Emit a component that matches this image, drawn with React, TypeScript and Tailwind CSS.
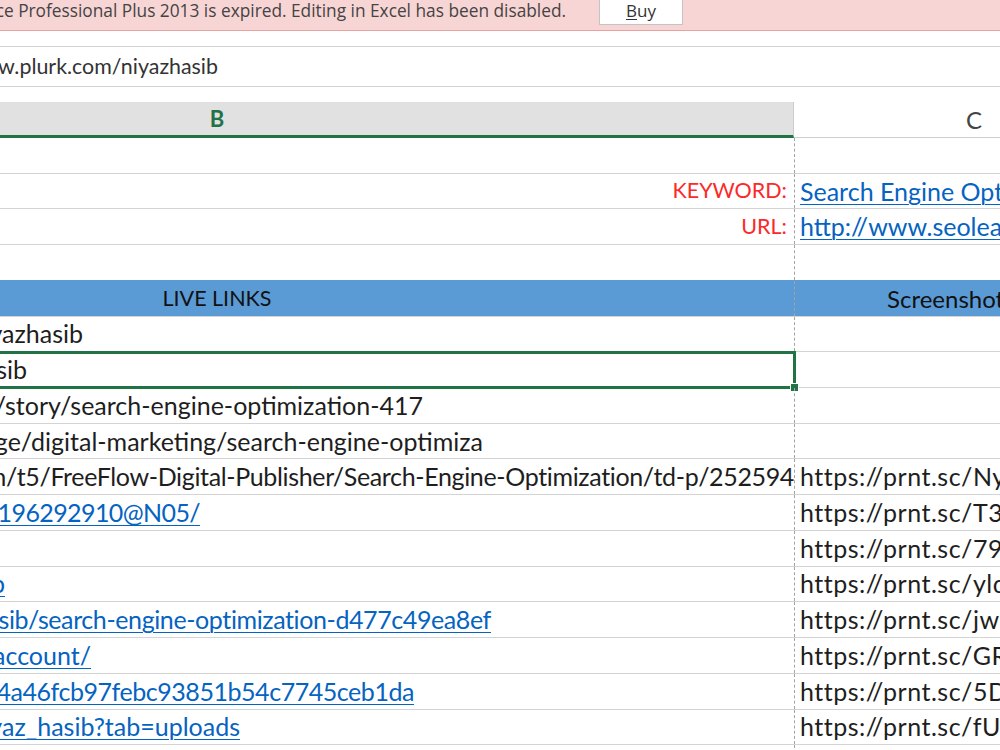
import type { ReactNode } from "react";

type Row =
  | { kind: "blank"; line?: string }
  | { kind: "label"; label: string; link: string }
  | { kind: "head" }
  | {
      kind: "data";
      text?: string;
      end?: string;
      fit?: string;
      link?: boolean;
      shot?: string;
      selected?: boolean;
    };

// end = where the visible part of the B text stops (the column starts off-screen)
const ROWS: Row[] = [
  { kind: "blank" },
  { kind: "label", label: "KEYWORD:", link: "Search Engine Optimization" },
  { kind: "label", label: "URL:", link: "http://www.seolearningbd.com/" },
  { kind: "blank", line: "border-[#5b9bd5]" },
  { kind: "head" },
  { kind: "data", text: "https://www.instapaper.com/p/niyazhasib", end: "w-[83px]" },
  { kind: "data", text: "https://www.plurk.com/niyazhasib", end: "w-[27px]", selected: true },
  { kind: "data", text: "https://www.pearltrees.com/story/search-engine-optimization-417", end: "w-[423px]" },
  { kind: "data", text: "https://www.storeboard.com/page/digital-marketing/search-engine-optimiza", end: "w-[483px]" },
  {
    kind: "data",
    text: "https://community.freeflow.com/t5/FreeFlow-Digital-Publisher/Search-Engine-Optimization/td-p/252594",
    end: "w-[794px]",
    fit: "tracking-[-0.35px]",
    shot: "https://prnt.sc/NyQ3b8kXzR",
  },
  {
    kind: "data",
    text: "https://www.flickr.com/people/196292910@N05/",
    end: "w-[200px]",
    fit: "tracking-[-0.6px]",
    link: true,
    shot: "https://prnt.sc/T3vK9wLmPq",
  },
  { kind: "data", shot: "https://prnt.sc/79HxQe2ZtN" },
  { kind: "data", text: "https://www.scoop.it/u/niyazhasib", end: "w-[5px]", link: true, shot: "https://prnt.sc/yldP4Wq8sV" },
  {
    kind: "data",
    text: "https://medium.com/@niyazhasib/search-engine-optimization-d477c49ea8ef",
    end: "w-[491px]",
    fit: "tracking-[-0.4px]",
    link: true,
    shot: "https://prnt.sc/jwuT6nRcB1",
  },
  { kind: "data", text: "https://www.bloglovin.com/niyazhasib/account/", end: "w-[91px]", link: true, shot: "https://prnt.sc/GRk2Lz7Ypm" },
  {
    kind: "data",
    text: "https://gist.github.com/niyazhasib/4a46fcb97febc93851b54c7745ceb1da",
    end: "w-[414px]",
    fit: "tracking-[-0.45px]",
    link: true,
    shot: "https://prnt.sc/5DsW3hJx0e",
  },
  { kind: "data", text: "https://www.behance.net/niyaz_hasib?tab=uploads", end: "w-[240px]", link: true, shot: "https://prnt.sc/fUlM8cVb2d" },
  { kind: "blank" },
];

const LINK = "text-[#0563c1] underline decoration-1 underline-offset-[3px]";

function CCell({ children, className = "" }: { children?: ReactNode; className?: string }) {
  return (
    <div
      className={`flex h-full items-center overflow-hidden whitespace-nowrap border-l border-dashed border-[#a3a3a3] pl-[5px] ${className}`}
    >
      {children}
    </div>
  );
}

function SheetRow({ row }: { row: Row }) {
  if (row.kind === "head") {
    return (
      <div className="grid h-[35.73px] grid-cols-[794px_1fr] border-b border-[#d4d4d4] bg-[#5b9bd5] text-[21.5px] text-[#111]">
        <div className="flex h-full w-[434px] items-center justify-center pt-px">LIVE LINKS</div>
        <CCell className="border-[#9fb7cf] pl-[92px] pt-px text-[24px]">Screenshots</CCell>
      </div>
    );
  }

  if (row.kind === "label") {
    return (
      <div className="grid h-[35.73px] grid-cols-[794px_1fr] border-b border-[#d4d4d4]">
        <div className="flex h-full items-center justify-end pr-[7px] text-[21.5px] text-[#fb2a2a]">{row.label}</div>
        <CCell>
          <span className={LINK}>{row.link}</span>
        </CCell>
      </div>
    );
  }

  if (row.kind === "blank") {
    return (
      <div className={`grid h-[35.73px] grid-cols-[794px_1fr] border-b ${row.line ?? "border-[#d4d4d4]"}`}>
        <div />
        <CCell />
      </div>
    );
  }

  return (
    <div className="relative grid h-[35.73px] grid-cols-[794px_1fr] border-b border-[#d4d4d4]">
      <div className="h-full overflow-hidden">
        {row.text && (
          <div className={`flex h-full items-center justify-end ${row.end}`}>
            <span className={`whitespace-nowrap ${row.fit ?? ""} ${row.link ? LINK : ""}`}>{row.text}</span>
          </div>
        )}
      </div>
      <CCell className="tracking-[0.5px]">{row.shot}</CCell>

      {/* selected cell + fill handle */}
      {row.selected && (
        <div className="absolute left-[-4px] top-[-1.5px] h-[38px] w-[800px] border-[3px] border-[#217346]">
          <div className="absolute bottom-[-6px] right-[-6px] h-[9px] w-[9px] border border-white bg-[#217346]" />
        </div>
      )}
    </div>
  );
}

export default function App() {
  return (
    <div className="h-[750px] w-[1000px] overflow-hidden bg-white font-['Lato',sans-serif] text-[25px] leading-none text-[#1e1e1e]">
      {/* licence notice */}
      <div className="flex h-[31px] items-start border-b border-[#e7a2a2] bg-[#f8d5d5]">
        <div className="flex h-[22px] w-[566px] items-center justify-end overflow-hidden">
          <span className="whitespace-nowrap font-['Open_Sans',sans-serif] text-[17.3px] text-[#444]">
            PRODUCT NOTICE Microsoft Office Professional Plus 2013 is expired. Editing in Excel has been disabled.
          </span>
        </div>
        <button className="ml-[33px] mt-[-1px] flex h-[26px] w-[84px] items-start justify-center border border-[#c4c4c4] bg-white pt-[1px] font-['Open_Sans',sans-serif] text-[17px] leading-[20px] text-[#333]">
          <span className="underline underline-offset-2">B</span>uy
        </button>
      </div>

      {/* formula bar */}
      <div className="mt-[15px] flex h-[41px] items-center border-y border-[#d4d4d4]">
        <div className="flex w-[218px] justify-end overflow-hidden pt-px">
          <span className="whitespace-nowrap text-[21.4px] text-[#333]">https://www.plurk.com/niyazhasib</span>
        </div>
      </div>

      {/* column headers */}
      <div className="mt-[15px] grid h-[36px] grid-cols-[794px_1fr]">
        <div className="flex border-b-[3px] border-r border-b-[#217346] border-r-[#cdcdcd] bg-[#e1e1e1]">
          <div className="flex w-[434px] items-center justify-center pt-px text-[22px] font-bold text-[#217346]">B</div>
        </div>
        <div className="flex items-center justify-end border-b border-[#cfcfcf] pr-[18px] text-[24px] text-[#444]">C</div>
      </div>

      {ROWS.map((row, i) => (
        <SheetRow key={i} row={row} />
      ))}
    </div>
  );
}
